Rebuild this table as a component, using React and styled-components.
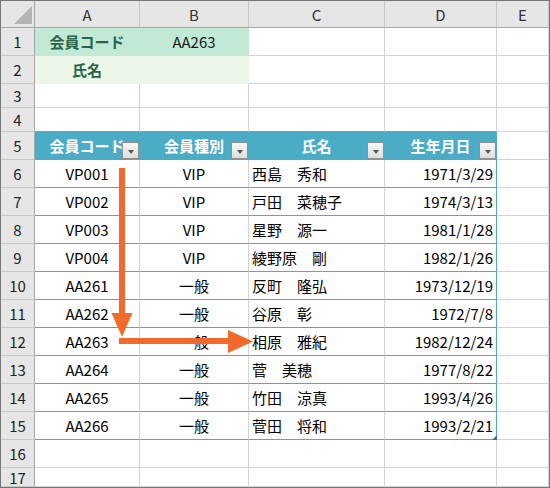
import React from "react";
import styled, { createGlobalStyle } from "styled-components";

const GlobalStyle = createGlobalStyle`
  body { margin: 0; background: #fff; }
  * { box-sizing: border-box; }
`;

const BLUE = "#4bacc6";
const GRID = "#d4d4d4";
const FONT = `"Noto Sans CJK JP", "Noto Sans", "Liberation Sans", sans-serif`;

const Frame = styled.div`
  position: relative;
  width: 550px;
  height: 488px;
  border: 1px solid #767676;
  overflow: hidden;
  background: #fff;
  font-family: ${FONT};
`;

const Sheet = styled.div`
  display: grid;
  height: 100%;
  grid-template-columns: 34px 105px 109px 136px 112px 1fr;
  grid-template-rows: 27px 28px 28px 24px 24px repeat(11, 28px) 28px 1fr;
`;

const Corner = styled.div`
  background: #e6e6e6;
  border-right: 1px solid #a6a6a6;
  border-bottom: 1px solid #a6a6a6;
  position: relative;
`;

const ColHead = styled.div`
  background: #e6e6e6;
  border-right: 1px solid #c8c8c8;
  border-bottom: 1px solid #a6a6a6;
  display: flex;
  align-items: center;
  justify-content: center;
  font-size: 15px;
  line-height: 1;
  color: #333;
`;

const RowHead = styled.div`
  background: #e6e6e6;
  border-right: 1px solid #a6a6a6;
  border-bottom: 1px solid #c8c8c8;
  display: flex;
  align-items: center;
  justify-content: center;
  font-size: 15px;
  line-height: 1;
  color: #222;
`;

const Cell = styled.div`
  position: relative;
  display: flex;
  align-items: center;
  justify-content: ${(p) => p.$align || "center"};
  padding: 0 3px;
  background: ${(p) => p.$bg || "#fff"};
  border-right: 1px solid ${(p) => p.$br || GRID};
  border-bottom: 1px solid ${(p) => p.$bb || GRID};
  font-size: 15px;
  line-height: 1.2;
  color: #000;
  white-space: nowrap;
`;

const FormCell = styled(Cell)`
  font-weight: ${(p) => (p.$label ? 700 : 400)};
  color: ${(p) => (p.$label ? "#27664a" : "#1a1a1a")};
`;

const HeadCell = styled(Cell)`
  background: ${BLUE};
  border-right-color: ${BLUE};
  border-bottom-color: ${BLUE};
  color: #fff;
  font-weight: 700;
`;

const FilterButton = styled.div`
  position: absolute;
  right: 0;
  bottom: 0;
  width: 17px;
  height: 17px;
  border: 1px solid #8f8f8f;
  background: linear-gradient(#f7f7f7, #dedede);
  display: flex;
  align-items: center;
  justify-content: center;
  padding-top: 2px;
  &::after {
    content: "";
    width: 0;
    height: 0;
    border-left: 3.5px solid transparent;
    border-right: 3.5px solid transparent;
    border-top: 4px solid #555;
  }
`;

const ResizeHandle = styled.div`
  position: absolute;
  right: -1px;
  bottom: -1px;
  width: 5px;
  height: 5px;
  background: #4a62ae;
  clip-path: polygon(100% 0, 100% 100%, 0 100%);
`;

const Overlay = styled.svg`
  position: absolute;
  top: -1px;
  left: -1px;
  pointer-events: none;
`;

const COLS = ["A", "B", "C", "D", "E"];
const HEADERS = ["会員コード", "会員種別", "氏名", "生年月日"];
const DATA = [
  ["VP001", "VIP", "西島　秀和", "1971/3/29"],
  ["VP002", "VIP", "戸田　菜穂子", "1974/3/13"],
  ["VP003", "VIP", "星野　源一", "1981/1/28"],
  ["VP004", "VIP", "綾野原　剛", "1982/1/26"],
  ["AA261", "一般", "反町　隆弘", "1973/12/19"],
  ["AA262", "一般", "谷原　彰", "1972/7/8"],
  ["AA263", "一般", "相原　雅紀", "1982/12/24"],
  ["AA264", "一般", "菅　美穂", "1977/8/22"],
  ["AA265", "一般", "竹田　涼真", "1993/4/26"],
  ["AA266", "一般", "菅田　将和", "1993/2/21"],
];

const MINT = "#c2e9d5";
const PALE = "#ecf7e7";
const ORANGE = "#f26a2b";

function Arrows() {
  return (
    <Overlay width="550" height="488" viewBox="0 0 550 488">
      <rect x="119" y="168" width="6" height="148" fill={ORANGE} />
      <polygon points="111.5,313 132.5,313 122,337" fill={ORANGE} />
      <rect x="119" y="338" width="111" height="6" fill={ORANGE} />
      <polygon points="228,330 228,353 253,341.5" fill={ORANGE} />
    </Overlay>
  );
}

export default function App() {
  const emptyRow = (n, bottomBlue) => (
    <React.Fragment key={`r${n}`}>
      <RowHead>{n}</RowHead>
      {COLS.map((c, i) => (
        <Cell key={c} $bb={bottomBlue && i < 4 ? BLUE : GRID} />
      ))}
    </React.Fragment>
  );

  return (
    <>
      <GlobalStyle />
      <Frame>
        <Sheet>
          <Corner>
            <svg width="33" height="26" style={{ display: "block" }}>
              <polygon points="31,5 31,23 13,23" fill="#b4b4b4" />
            </svg>
          </Corner>
          {COLS.map((c) => (
            <ColHead key={c}>{c}</ColHead>
          ))}

          <RowHead>1</RowHead>
          <FormCell $label $bg={MINT} $br={MINT} $bb={MINT}>会員コード</FormCell>
          <FormCell $bg={MINT} $br={MINT} $bb={MINT}>AA263</FormCell>
          <Cell />
          <Cell />
          <Cell />

          <RowHead>2</RowHead>
          <FormCell $label $bg={PALE} $br={PALE} $bb={PALE}>氏名</FormCell>
          <FormCell $bg={PALE} $br={PALE} $bb={PALE} />
          <Cell />
          <Cell />
          <Cell />

          {emptyRow(3, false)}
          {emptyRow(4, true)}

          <RowHead>5</RowHead>
          {HEADERS.map((h) => (
            <HeadCell key={h}>
              {h}
              <FilterButton />
            </HeadCell>
          ))}
          <Cell />

          {DATA.map((r, i) => (
            <React.Fragment key={r[0]}>
              <RowHead>{i + 6}</RowHead>
              <Cell $bb={BLUE}>{r[0]}</Cell>
              <Cell $bb={BLUE}>{r[1]}</Cell>
              <Cell $bb={BLUE} $align="flex-start">{r[2]}</Cell>
              <Cell $bb={BLUE} $br={BLUE} $align="flex-end">
                {r[3]}
                {i === DATA.length - 1 && <ResizeHandle />}
              </Cell>
              <Cell />
            </React.Fragment>
          ))}

          {emptyRow(16, false)}
          {emptyRow(17, false)}
        </Sheet>
        <Arrows />
      </Frame>
    </>
  );
}
